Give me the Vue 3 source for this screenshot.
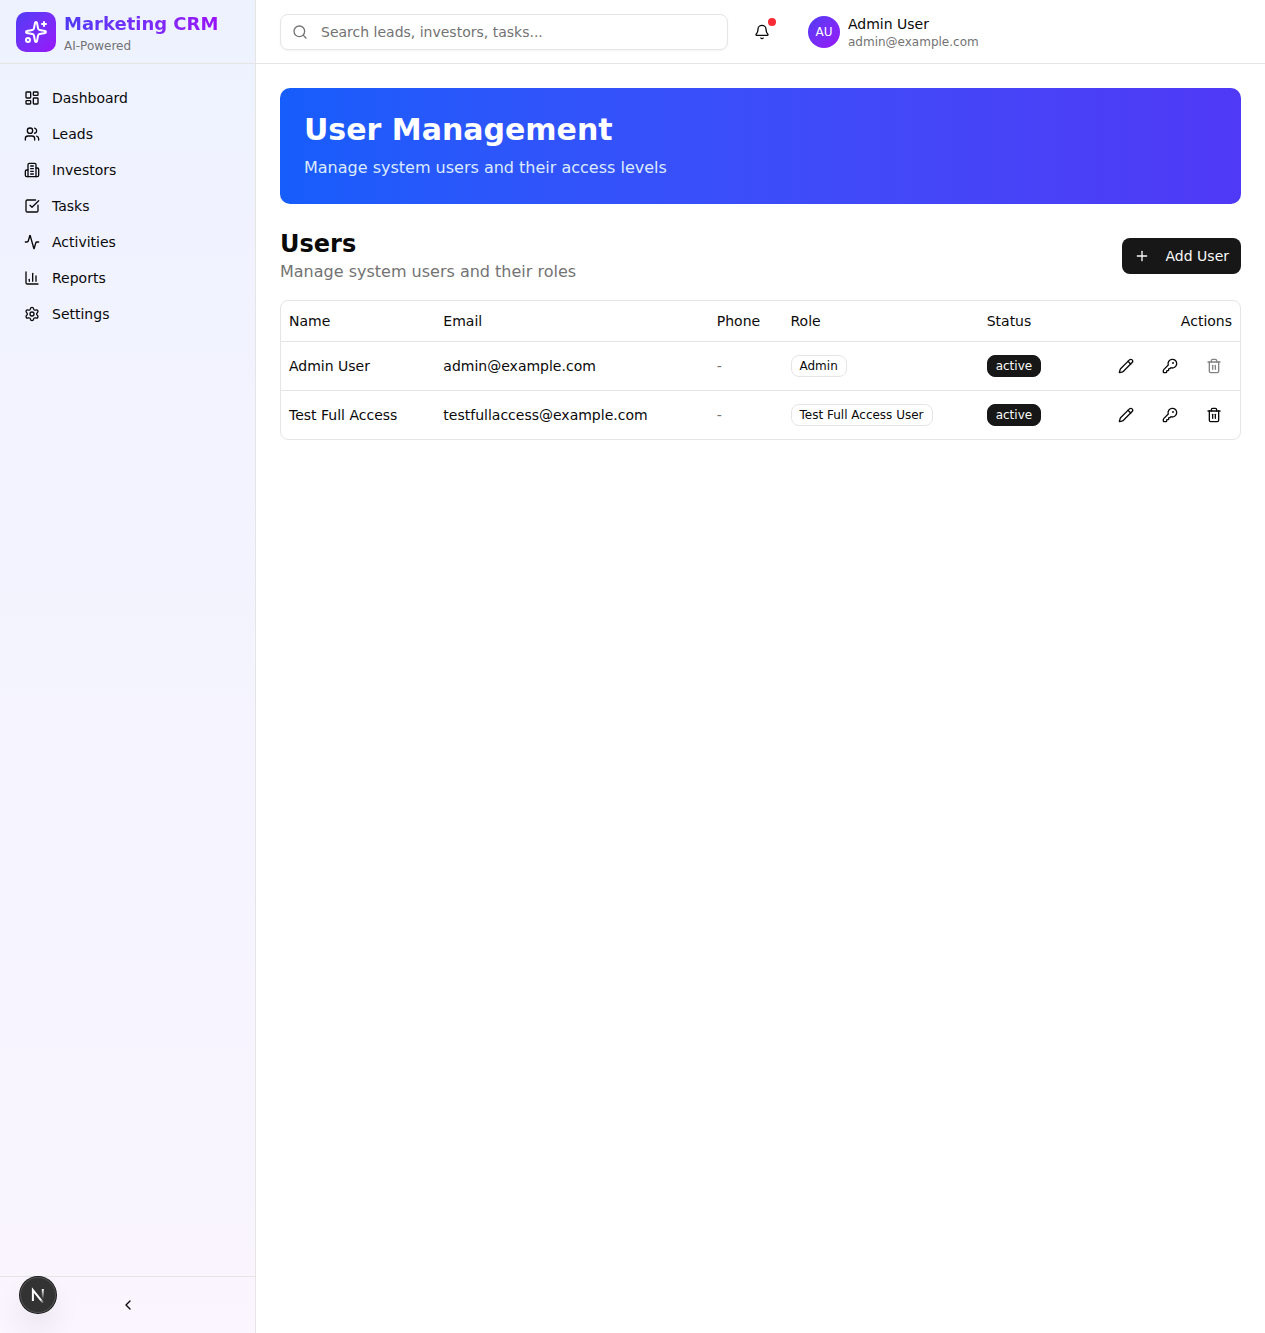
<script setup>
import { h, ref } from 'vue'

const shapes = {
  sparkles: [
    'M11.017 2.814a1 1 0 0 1 1.966 0l1.051 5.558a2 2 0 0 0 1.594 1.594l5.558 1.051a1 1 0 0 1 0 1.966l-5.558 1.051a2 2 0 0 0-1.594 1.594l-1.051 5.558a1 1 0 0 1-1.966 0l-1.051-5.558a2 2 0 0 0-1.594-1.594l-5.558-1.051a1 1 0 0 1 0-1.966l5.558-1.051a2 2 0 0 0 1.594-1.594z',
    'M20 2v4',
    'M22 4h-4',
    { cx: 4, cy: 20, r: 2 },
  ],
  dashboard: [
    { x: 3, y: 3, width: 7, height: 9, rx: 1 },
    { x: 14, y: 3, width: 7, height: 5, rx: 1 },
    { x: 14, y: 12, width: 7, height: 9, rx: 1 },
    { x: 3, y: 16, width: 7, height: 5, rx: 1 },
  ],
  users: [
    'M16 21v-2a4 4 0 0 0-4-4H6a4 4 0 0 0-4 4v2',
    'M16 3.128a4 4 0 0 1 0 7.744',
    'M22 21v-2a4 4 0 0 0-3-3.87',
    { cx: 9, cy: 7, r: 4 },
  ],
  building: [
    'M6 22V4a2 2 0 0 1 2-2h8a2 2 0 0 1 2 2v18Z',
    'M6 12H4a2 2 0 0 0-2 2v6a2 2 0 0 0 2 2h2',
    'M18 9h2a2 2 0 0 1 2 2v9a2 2 0 0 1-2 2h-2',
    'M10 6h4',
    'M10 10h4',
    'M10 14h4',
    'M10 18h4',
  ],
  check: [
    'M21 10.656V19a2 2 0 0 1-2 2H5a2 2 0 0 1-2-2V5a2 2 0 0 1 2-2h12.344',
    'm9 11 3 3L22 4',
  ],
  activity: [
    'M22 12h-2.48a2 2 0 0 0-1.93 1.46l-2.35 8.36a.25.25 0 0 1-.48 0L9.24 2.18a.25.25 0 0 0-.48 0l-2.35 8.36A2 2 0 0 1 4.49 12H2',
  ],
  chart: ['M3 3v16a2 2 0 0 0 2 2h16', 'M18 17V9', 'M13 17V5', 'M8 17v-3'],
  settings: [
    'M9.671 4.136a2.34 2.34 0 0 1 4.659 0 2.34 2.34 0 0 0 3.319 1.915 2.34 2.34 0 0 1 2.33 4.033 2.34 2.34 0 0 0 0 3.831 2.34 2.34 0 0 1-2.33 4.033 2.34 2.34 0 0 0-3.319 1.915 2.34 2.34 0 0 1-4.659 0 2.34 2.34 0 0 0-3.32-1.915 2.34 2.34 0 0 1-2.33-4.033 2.34 2.34 0 0 0 0-3.831A2.34 2.34 0 0 1 6.35 6.051a2.34 2.34 0 0 0 3.319-1.915',
    { cx: 12, cy: 12, r: 3 },
  ],
  search: ['m21 21-4.34-4.34', { cx: 11, cy: 11, r: 8 }],
  bell: [
    'M10.268 21a2 2 0 0 0 3.464 0',
    'M3.262 15.326A1 1 0 0 0 4 17h16a1 1 0 0 0 .74-1.673C19.41 13.956 18 12.499 18 8A6 6 0 0 0 6 8c0 4.499-1.411 5.956-2.738 7.326',
  ],
  pencil: [
    'M21.174 6.812a1 1 0 0 0-3.986-3.987L3.842 16.174a2 2 0 0 0-.5.83l-1.321 4.352a.5.5 0 0 0 .623.622l4.353-1.32a2 2 0 0 0 .83-.497z',
    'm15 5 4 4',
  ],
  key: [
    'M2.586 17.414A2 2 0 0 0 2 18.828V21a1 1 0 0 0 1 1h3a1 1 0 0 0 1-1v-1a1 1 0 0 1 1-1h1a1 1 0 0 0 1-1v-1a1 1 0 0 1 1-1h.172a2 2 0 0 0 1.414-.586l.814-.814a6.5 6.5 0 1 0-4-4z',
    { cx: 16.5, cy: 7.5, r: 0.5, fill: 'currentColor' },
  ],
  trash: [
    'M10 11v6',
    'M14 11v6',
    'M19 6v14a2 2 0 0 1-2 2H7a2 2 0 0 1-2-2V6',
    'M3 6h18',
    'M8 6V4a2 2 0 0 1 2-2h4a2 2 0 0 1 2 2v2',
  ],
  plus: ['M5 12h14', 'M12 5v14'],
  chevronLeft: ['m15 18-6-6 6-6'],
}

// Stroke icon on a 24-unit grid: strings are paths, objects are circles or rects.
const Icon = ({ name, size = 16 }) =>
  h(
    'svg',
    {
      width: size,
      height: size,
      viewBox: '0 0 24 24',
      fill: 'none',
      stroke: 'currentColor',
      'stroke-width': 2,
      'stroke-linecap': 'round',
      'stroke-linejoin': 'round',
      'aria-hidden': 'true',
    },
    shapes[name].map((s) =>
      typeof s === 'string' ? h('path', { d: s }) : h('r' in s ? 'circle' : 'rect', s)
    )
  )
Icon.props = ['name', 'size']

const nav = [
  { label: 'Dashboard', icon: 'dashboard' },
  { label: 'Leads', icon: 'users' },
  { label: 'Investors', icon: 'building' },
  { label: 'Tasks', icon: 'check' },
  { label: 'Activities', icon: 'activity' },
  { label: 'Reports', icon: 'chart' },
  { label: 'Settings', icon: 'settings' },
]

const users = [
  { name: 'Admin User', email: 'admin@example.com', phone: '-', role: 'Admin', status: 'active', locked: true },
  { name: 'Test Full Access', email: 'testfullaccess@example.com', phone: '-', role: 'Test Full Access User', status: 'active', locked: false },
]

const query = ref('')
</script>

<template>
  <div class="app">
    <aside class="sidebar">
      <div class="brand">
        <div class="logo"><Icon name="sparkles" :size="24" /></div>
        <div>
          <div class="brand-name">Marketing CRM</div>
          <div class="small">AI-Powered</div>
        </div>
      </div>
      <nav class="nav">
        <a v-for="item in nav" :key="item.label" href="#" class="nav-link">
          <Icon :name="item.icon" />
          <span>{{ item.label }}</span>
        </a>
      </nav>
      <div class="sidebar-foot">
        <button type="button" class="collapse" aria-label="Collapse sidebar">
          <Icon name="chevronLeft" />
        </button>
      </div>
    </aside>

    <div class="content">
      <header class="topbar">
        <label class="search">
          <Icon name="search" class="search-icon" />
          <input v-model="query" type="search" aria-label="Search" placeholder="Search leads, investors, tasks..." />
        </label>
        <button type="button" class="bell" aria-label="Notifications">
          <Icon name="bell" />
          <span class="dot"></span>
        </button>
        <button type="button" class="account">
          <span class="avatar">AU</span>
          <span class="account-text">
            <span class="account-name">Admin User</span>
            <span class="small">admin@example.com</span>
          </span>
        </button>
      </header>

      <main class="main">
        <section class="banner">
          <h1>User Management</h1>
          <p>Manage system users and their access levels</p>
        </section>

        <section class="users">
          <div class="users-head">
            <div>
              <h2>Users</h2>
              <p>Manage system users and their roles</p>
            </div>
            <button type="button" class="add"><Icon name="plus" /> Add User</button>
          </div>

          <div class="table-box">
            <table>
              <thead>
                <tr>
                  <th scope="col">Name</th>
                  <th scope="col">Email</th>
                  <th scope="col">Phone</th>
                  <th scope="col">Role</th>
                  <th scope="col">Status</th>
                  <th scope="col" class="right">Actions</th>
                </tr>
              </thead>
              <tbody>
                <tr v-for="user in users" :key="user.email">
                  <td>{{ user.name }}</td>
                  <td>{{ user.email }}</td>
                  <td class="muted">{{ user.phone }}</td>
                  <td><span class="badge">{{ user.role }}</span></td>
                  <td><span class="badge solid">{{ user.status }}</span></td>
                  <td>
                    <div class="actions">
                      <button type="button" :aria-label="`Edit ${user.name}`"><Icon name="pencil" /></button>
                      <button type="button" :aria-label="`Reset password for ${user.name}`"><Icon name="key" /></button>
                      <button type="button" :disabled="user.locked" :aria-label="`Delete ${user.name}`"><Icon name="trash" /></button>
                    </div>
                  </td>
                </tr>
              </tbody>
            </table>
          </div>
        </section>
      </main>
    </div>

    <button type="button" class="devtools" aria-label="Open developer tools">
      <svg width="40" height="40" viewBox="0 0 40 40" fill="none" aria-hidden="true">
        <defs>
          <linearGradient id="mark-diagonal" x1="20" y1="20" x2="26" y2="28" gradientUnits="userSpaceOnUse">
            <stop stop-color="#fff" />
            <stop offset="0.5" stop-color="#fff" />
            <stop offset="1" stop-color="#fff" stop-opacity="0" />
          </linearGradient>
          <linearGradient id="mark-bar" x1="25" y1="14" x2="25" y2="24" gradientUnits="userSpaceOnUse">
            <stop stop-color="#fff" />
            <stop offset="1" stop-color="#fff" stop-opacity="0" />
          </linearGradient>
        </defs>
        <path d="M14.9 26V15L25.2 27.8" stroke="url(#mark-diagonal)" stroke-width="2" />
        <path d="M24.8 14v10" stroke="url(#mark-bar)" stroke-width="2" />
      </svg>
    </button>
  </div>
</template>

<style>
body {
  margin: 0;
  background: #fff;
}
</style>

<style scoped>
.app {
  --blue: oklch(54.6% 0.245 262.881);
  --indigo: oklch(51.1% 0.262 276.966);
  --purple: oklch(55.8% 0.288 302.321);
  display: flex;
  min-height: 100vh;
  color: #0a0a0a;
  font-family: "DejaVu Sans", sans-serif;
  font-size: 14px;
  line-height: 20px;
}

.app *,
.app {
  box-sizing: border-box;
}

svg {
  display: block;
  flex-shrink: 0;
}

h1,
h2,
p {
  margin: 0;
}

button {
  display: inline-flex;
  align-items: center;
  justify-content: center;
  padding: 0;
  border: 0;
  border-radius: 8px;
  background: none;
  color: inherit;
  font: inherit;
  cursor: pointer;
}

.small {
  color: #737373;
  font-size: 12px;
  line-height: 16px;
}

.muted {
  color: #737373;
}

/* Sidebar */
.sidebar {
  display: flex;
  flex-direction: column;
  flex-shrink: 0;
  width: 256px;
  border-right: 1px solid #e5e5e5;
  background: linear-gradient(to bottom in oklab, oklch(96.2% 0.018 272.314), oklch(97.7% 0.014 308.299));
}

.brand {
  display: flex;
  align-items: center;
  gap: 8px;
  height: 64px;
  padding: 0 16px;
  border-bottom: 1px solid #e5e5e5;
}

.logo {
  display: flex;
  align-items: center;
  justify-content: center;
  width: 40px;
  height: 40px;
  border-radius: 10px;
  background: linear-gradient(to bottom right in oklab, var(--indigo), var(--purple));
  color: #fff;
}

.brand-name {
  background: linear-gradient(to right in oklab, var(--indigo), var(--purple));
  background-clip: text;
  color: transparent;
  font-size: 18px;
  font-weight: 700;
  line-height: 28px;
}

.nav {
  display: flex;
  flex: 1;
  flex-direction: column;
  padding: 16px 12px;
}

.nav-link {
  display: flex;
  align-items: center;
  gap: 12px;
  height: 36px;
  padding: 0 12px;
  border-radius: 8px;
  color: inherit;
  text-decoration: none;
}

.sidebar-foot {
  padding: 12px;
  border-top: 1px solid #e5e5e5;
}

.collapse {
  width: 100%;
  height: 32px;
}

/* Top bar */
.content {
  flex: 1;
  min-width: 0;
}

.topbar {
  display: flex;
  align-items: center;
  gap: 16px;
  height: 64px;
  padding: 0 24px;
  border-bottom: 1px solid #e5e5e5;
}

.search {
  position: relative;
  flex: 0 1 448px;
}

.search-icon {
  position: absolute;
  top: 10px;
  left: 12px;
  color: #737373;
}

.search input {
  display: block;
  width: 100%;
  height: 36px;
  padding: 4px 12px 4px 40px;
  border: 1px solid #e5e5e5;
  border-radius: 8px;
  outline: 0;
  background: transparent;
  box-shadow: 0 1px 2px rgb(0 0 0 / 5%);
  color: inherit;
  font: inherit;
  appearance: none;
}

.search input::placeholder {
  color: #737373;
  opacity: 1;
}

.bell {
  position: relative;
  width: 36px;
  height: 36px;
}

.dot {
  position: absolute;
  top: 4px;
  right: 4px;
  width: 8px;
  height: 8px;
  border-radius: 50%;
  background: #fb2c36;
}

.account {
  gap: 8px;
  padding: 0 12px;
  text-align: left;
}

.avatar {
  display: flex;
  align-items: center;
  justify-content: center;
  width: 32px;
  height: 32px;
  border-radius: 50%;
  background: linear-gradient(to bottom right in oklab, var(--indigo), var(--purple));
  color: #fff;
  font-size: 12px;
  line-height: 16px;
}

.account-text {
  display: flex;
  flex-direction: column;
}

/* Page */
.main {
  display: flex;
  flex-direction: column;
  gap: 24px;
  padding: 24px;
  font-size: 16px;
  line-height: 24px;
}

.banner {
  display: flex;
  flex-direction: column;
  gap: 8px;
  padding: 24px;
  border-radius: 10px;
  background: linear-gradient(to right in oklab, var(--blue), var(--indigo));
  color: #dbeafe;
}

.banner h1 {
  color: #fff;
  font-size: 30px;
  line-height: 36px;
}

.users {
  display: flex;
  flex-direction: column;
  gap: 16px;
}

.users-head {
  display: flex;
  align-items: center;
  justify-content: space-between;
}

.users-head h2 {
  font-size: 24px;
  line-height: 32px;
}

.users-head p {
  color: #737373;
}

.add {
  gap: 16px;
  height: 36px;
  padding: 0 12px;
  background: #171717;
  color: #fafafa;
  font-size: 14px;
  line-height: 20px;
}

.table-box {
  overflow-x: auto;
  border: 1px solid #e5e5e5;
  border-radius: 8px;
}

table {
  width: 100%;
  border-collapse: collapse;
  font-size: 14px;
  line-height: 20px;
}

th {
  height: 40px;
  padding: 0 8px;
  font-weight: 400;
  text-align: left;
  white-space: nowrap;
}

.right {
  text-align: right;
}

td {
  padding: 8px;
  white-space: nowrap;
}

tbody tr {
  border-top: 1px solid #e5e5e5;
}

.badge {
  display: inline-flex;
  padding: 2px 8px;
  border: 1px solid #e5e5e5;
  border-radius: 8px;
  font-size: 12px;
  line-height: 16px;
}

.solid {
  border-color: #171717;
  background: #171717;
  color: #fafafa;
}

.actions {
  display: flex;
  justify-content: flex-end;
  gap: 8px;
}

.actions button {
  width: 36px;
  height: 32px;
}

.actions button:disabled {
  opacity: 0.5;
  cursor: default;
}

/* Floating developer button */
.devtools {
  position: fixed;
  bottom: 20px;
  left: 20px;
  width: 36px;
  height: 36px;
  border-radius: 50%;
  background: #333;
  box-shadow:
    0 0 0 1px #171717,
    inset 0 0 0 1px #505050,
    0 16px 32px -8px rgb(0 0 0 / 24%);
}
</style>
